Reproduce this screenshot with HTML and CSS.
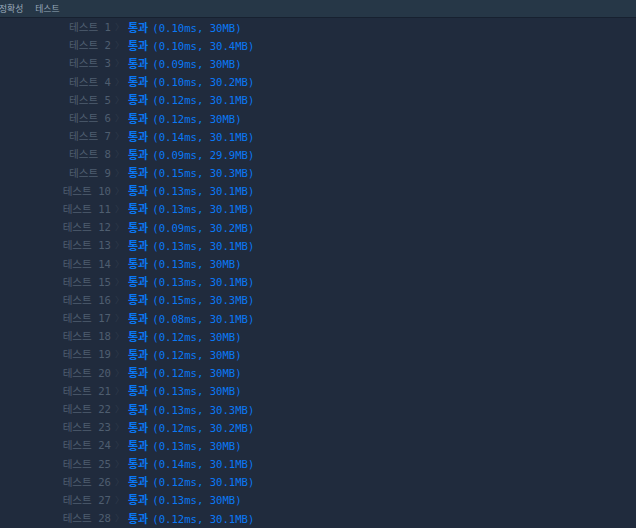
FILE: index.html
```html
<!DOCTYPE html>
<html>
<head>
    <title>채점 결과</title>
    <meta name="viewport" content="width=device-width, initial-scale=1">
    <link rel="stylesheet" href="styles.css">
</head>
<body>
    <div class="tabs">
        <span class="tab">정확성</span>
        <span class="tab">테스트</span>
    </div>

    <div id="results" class="results"></div>

    <script>
        const results = [
            ['0.10ms', '30MB'], ['0.10ms', '30.4MB'], ['0.09ms', '30MB'], ['0.10ms', '30.2MB'],
            ['0.12ms', '30.1MB'], ['0.12ms', '30MB'], ['0.14ms', '30.1MB'], ['0.09ms', '29.9MB'],
            ['0.15ms', '30.3MB'], ['0.13ms', '30.1MB'], ['0.13ms', '30.1MB'], ['0.09ms', '30.2MB'],
            ['0.13ms', '30.1MB'], ['0.13ms', '30MB'], ['0.13ms', '30.1MB'], ['0.15ms', '30.3MB'],
            ['0.08ms', '30.1MB'], ['0.12ms', '30MB'], ['0.12ms', '30MB'], ['0.12ms', '30MB'],
            ['0.13ms', '30MB'], ['0.13ms', '30.3MB'], ['0.12ms', '30.2MB'], ['0.13ms', '30MB'],
            ['0.14ms', '30.1MB'], ['0.12ms', '30.1MB'], ['0.13ms', '30MB'], ['0.12ms', '30.1MB']
        ];

        const list = document.getElementById('results');
        results.forEach((r, i) => {
            const row = document.createElement('div');
            row.className = 'row';
            row.innerHTML =
                '<span class="label">테스트 ' + (i + 1) + '</span>' +
                '<span class="chevron">〉</span>' +
                '<span class="result"><b class="pass">통과</b>(' + r[0] + ', ' + r[1] + ')</span>';
            list.appendChild(row);
        });
    </script>
</body>
</html>
```

FILE: styles.css
```css
body {
    margin: 0;
    background: #202b3d;
    font-family: "DejaVu Sans Mono", "Noto Sans CJK KR", monospace;
    overflow: hidden;
}
.tabs {
    height: 17px;
    background: #263747;
    border-bottom: 1px solid #172130;
    display: flex;
    align-items: center;
    gap: 12px;
    margin-left: -1px;
}
.tab {
    font-family: "Noto Sans CJK KR", sans-serif;
    font-size: 8.8px;
    color: #98a8b9;
    line-height: 17px;
}
.results {
    font-size: 10.6px;
}
.row {
    display: grid;
    grid-template-columns: 111px 14px auto;
    height: 18.2px;
    align-items: center;
    white-space: pre;
}
.row span {
    line-height: 14px;
}
.label {
    text-align: right;
    color: #4f5e70;
}
.chevron {
    font-family: "Noto Sans CJK KR", sans-serif;
    color: #2e3a4b;
    font-size: 9px;
    padding-left: 4px;
}
.result {
    color: #0a78f5;
    padding-left: 3px;
}
.pass {
    font-family: "Noto Sans CJK KR", sans-serif;
    font-weight: bold;
    font-size: 11px;
    margin-right: 4px;
}
```
